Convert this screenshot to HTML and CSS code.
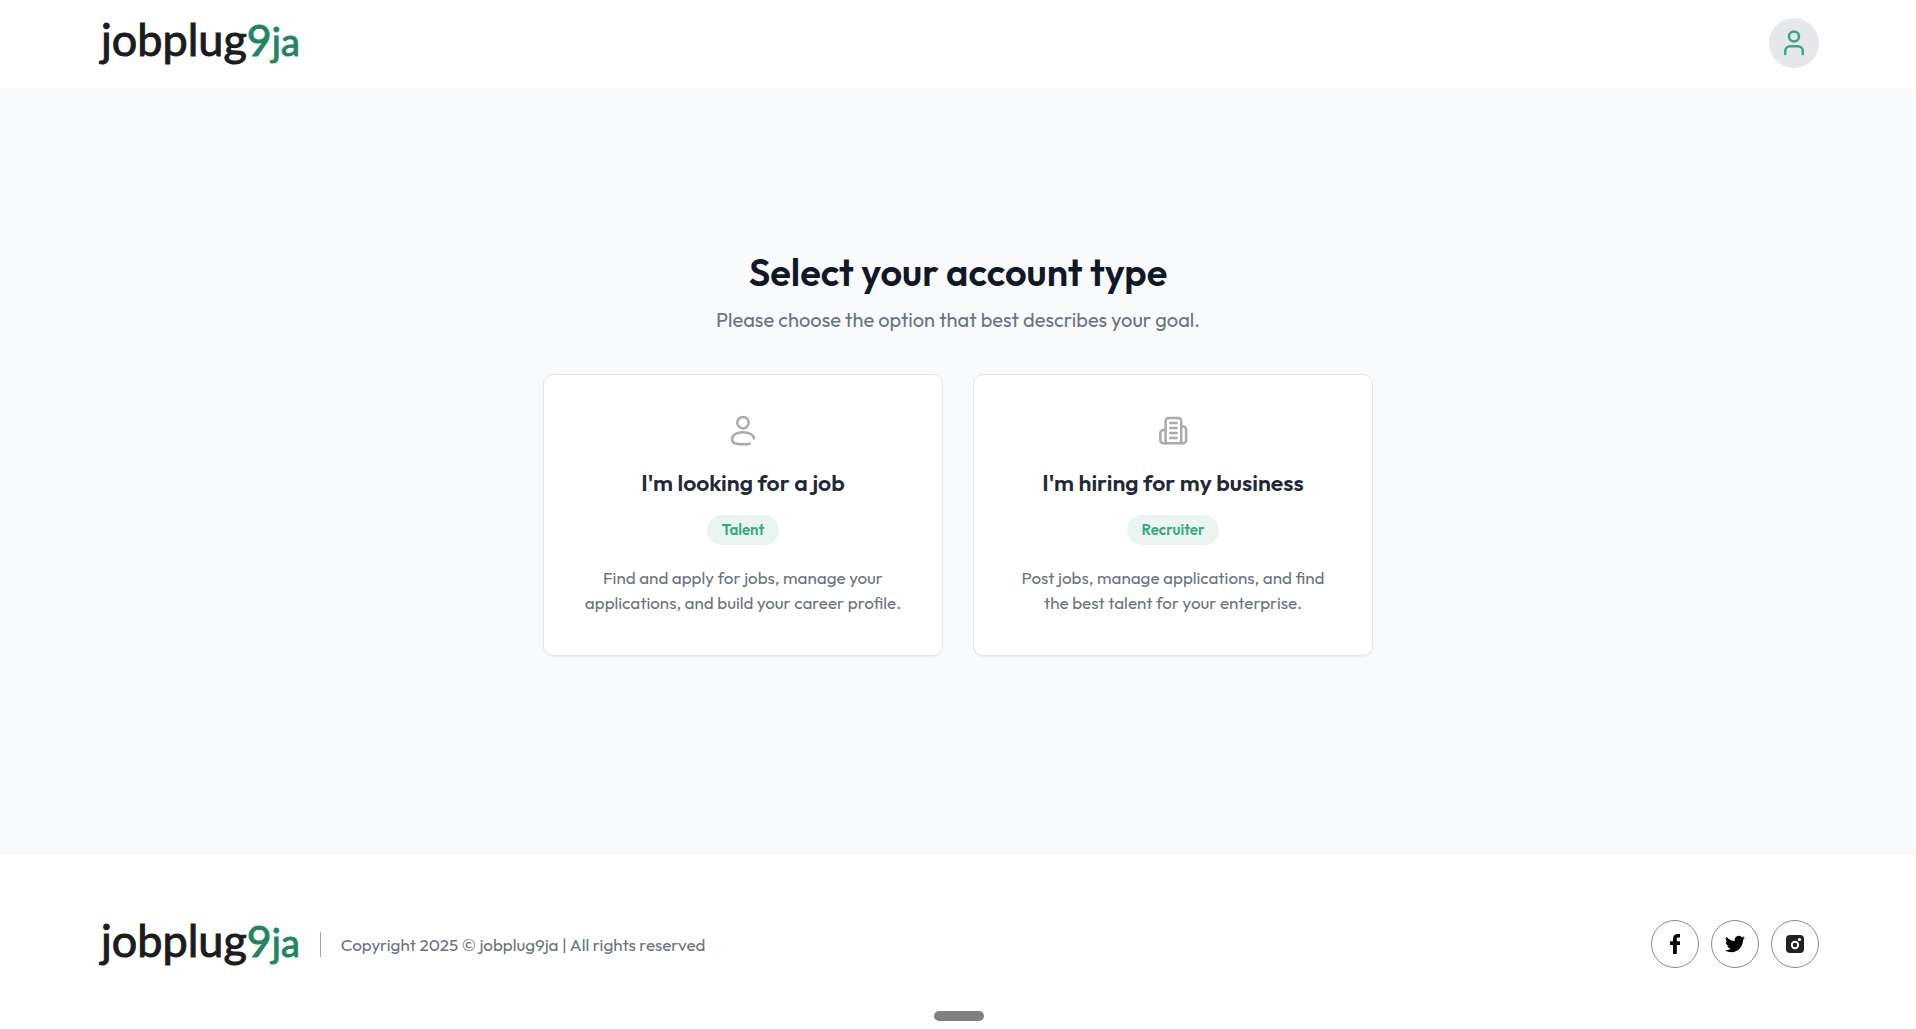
FILE: index.html
```html
<!DOCTYPE html>
<html lang="en">
<head>
<meta charset="utf-8">
<meta name="viewport" content="width=device-width, initial-scale=1">
<title>jobplug9ja | Select your account type</title>
<link rel="stylesheet" href="styles.css">
</head>
<body>
<header class="header">
  <a class="logo" href="#">jobplug<span class="logo-nine">9</span><span class="logo-ja">ja</span></a>
  <button class="avatar" type="button" aria-label="Account">
    <svg width="24" height="28" viewBox="0 0 24 28" fill="none" stroke="currentColor" stroke-width="2.5" stroke-linecap="round">
      <circle cx="12" cy="7.500" r="5"/>
      <path d="M3.200 25v-2.800a5 5 0 0 1 5-5h7.600a5 5 0 0 1 5 5V25"/>
    </svg>
  </button>
</header>

<main class="main">
  <h1 class="title">Select your account type</h1>
  <p class="subtitle">Please choose the option that best describes your goal.</p>
  <div class="cards">
    <a class="card" href="#">
      <svg class="card-icon" width="32" height="32" viewBox="0 0 32 32" fill="none" stroke="currentColor" stroke-width="2.500" stroke-linecap="round">
        <circle cx="16" cy="7.700" r="5.700"/>
        <path d="M26.900 23.600C26.900 19.800 22 17.300 16 17.300S5.100 20 5.100 23.900c0 4.800 4.400 5.400 10.900 5.400 2.800 0 5-.1 6.700-.6"/>
      </svg>
      <h2 class="card-title">I'm looking for a job</h2>
      <span class="pill">Talent</span>
      <p class="card-text">Find and apply for jobs, manage your applications, and build your career profile.</p>
    </a>
    <a class="card" href="#">
      <svg class="card-icon" width="32" height="32" viewBox="0 0 32 32" fill="none" stroke="currentColor" stroke-width="2.500" stroke-linecap="round" stroke-linejoin="round">
        <path d="M8.600 28.200V6a3 3 0 0 1 3-3h9.600a3 3 0 0 1 3 3v22.200"/>
        <path d="M8.600 15H6.300a3 3 0 0 0-3 3v7.200a3 3 0 0 0 3 3h19.800a3 3 0 0 0 3-3V14.500a3 3 0 0 0-3-3h-1.900"/>
        <path d="M13.200 8h6.400M13.200 13h6.400M13.200 18h6.400M13.200 23h6.400"/>
      </svg>
      <h2 class="card-title">I'm hiring for my business</h2>
      <span class="pill">Recruiter</span>
      <p class="card-text">Post jobs, manage applications, and find the best talent for your enterprise.</p>
    </a>
  </div>
</main>

<footer class="footer">
  <div class="footer-brand">
    <a class="logo" href="#">jobplug<span class="logo-nine">9</span><span class="logo-ja">ja</span></a>
    <p class="copyright">Copyright 2025 © jobplug9ja | All rights reserved</p>
  </div>
  <nav class="socials" aria-label="Social media">
    <a class="social" href="#" aria-label="Facebook">
      <svg width="20" height="20" viewBox="0 0 20 20" fill="currentColor"><path d="M8 20v-9H5V7.200h3V5c0-3.200 1.900-5 4.900-5H15v3.600h-1.800c-1.200 0-1.400.6-1.400 1.700v1.900H15V11h-3.200v9z"/></svg>
    </a>
    <a class="social" href="#" aria-label="Twitter">
      <svg width="20" height="20" viewBox="0 0 24 24" fill="currentColor"><path d="M23.950 4.570a10 10 0 0 1-2.820.770 4.960 4.960 0 0 0 2.160-2.720c-.95.560-2 .960-3.120 1.180a4.920 4.920 0 0 0-8.380 4.480C7.690 8.090 4.070 6.130 1.640 3.160a4.920 4.920 0 0 0 1.520 6.570 4.900 4.900 0 0 1-2.230-.610v.060a4.920 4.920 0 0 0 3.950 4.830 5 5 0 0 1-2.210.080 4.940 4.940 0 0 0 4.600 3.420A9.870 9.870 0 0 1 0 19.540a13.990 13.990 0 0 0 7.550 2.210c9.050 0 14-7.500 14-13.990 0-.21 0-.42-.020-.63a9.940 9.940 0 0 0 2.420-2.560z"/></svg>
    </a>
    <a class="social social-instagram" href="#" aria-label="Instagram">
      <svg width="20" height="20" viewBox="0 0 20 20" fill="currentColor"><rect x="1" y="1" width="18" height="18" rx="4"/><circle cx="10" cy="11" r="3.200" fill="none" stroke="#fff" stroke-width="1.900"/><circle cx="14.500" cy="5.500" r="1.600" fill="#fff"/></svg>
    </a>
  </nav>
  <div class="handle"></div>
</footer>
</body>
</html>
```

FILE: styles.css
```css
* {
  box-sizing: border-box;
}

body {
  margin: 0;
  min-height: 100vh;
  display: flex;
  flex-direction: column;
  background: #fff;
  color: #6b7280;
  font-family: Outfit, Lato, sans-serif;
}

h1, h2, p {
  margin: 0;
}

a {
  color: inherit;
  text-decoration: none;
}

.header {
  height: 88px;
  padding: 0 97px 2px 101px;
  display: flex;
  align-items: center;
  justify-content: space-between;
}

.logo {
  padding-bottom: 8px;
  font-family: Lato, sans-serif;
  font-size: 45px;
  line-height: 40px;
  color: #1c1c1c;
  white-space: nowrap;
  -webkit-text-stroke: 1px currentColor;
}

.logo-nine,
.logo-ja {
  line-height: 1px;
  color: #1f8563;
}

.logo-nine {
  font-size: 43px;
}

.logo-ja {
  font-size: 38px;
}

.avatar {
  width: 50px;
  height: 50px;
  padding: 0;
  border: 0;
  border-radius: 50%;
  display: grid;
  place-items: center;
  background: #e5e7eb;
  color: #38a882;
}

.main {
  flex: 1;
  padding: 0 24px 40px;
  display: flex;
  flex-direction: column;
  align-items: center;
  justify-content: center;
  background: #f9fafc;
  text-align: center;
}

.title {
  font-size: 38px;
  line-height: 48px;
  font-weight: 600;
  color: #111827;
}

.subtitle {
  margin: 10px 0 40px;
  font-size: 20px;
  line-height: 28px;
}

.cards {
  width: 100%;
  max-width: 830px;
  display: grid;
  grid-template-columns: 1fr 1fr;
  gap: 30px;
}

.card {
  padding: 40px 36px;
  border: 1px solid #e5e7eb;
  border-radius: 10px;
  display: flex;
  flex-direction: column;
  align-items: center;
  background: #fff;
  box-shadow: 0 1px 2px rgba(0, 0, 0, 0.06);
}

.card-icon {
  color: #aaa;
}

.card-title {
  margin: 20px 0 16px;
  font-size: 23px;
  line-height: 32px;
  font-weight: 600;
  color: #1f2937;
}

.pill {
  padding: 0 15px;
  border-radius: 15px;
  font-size: 15px;
  line-height: 30px;
  font-weight: 600;
  background: #eaf5f1;
  color: #38a882;
}

.card-text {
  margin-top: 20px;
  font-size: 17px;
  line-height: 25px;
}

.footer {
  position: relative;
  padding: 65px 97px 61px 101px;
  display: flex;
  align-items: center;
  justify-content: space-between;
}

.footer-brand {
  display: flex;
  align-items: center;
  gap: 20px;
}

.copyright {
  padding-left: 20px;
  border-left: 1px solid #9ca3af;
  font-size: 17px;
  line-height: 25px;
}

.socials {
  display: flex;
  gap: 12px;
}

.social {
  width: 48px;
  height: 48px;
  border: 1px solid #8a8a8a;
  border-radius: 50%;
  display: grid;
  place-items: center;
  color: #000;
}

.social-instagram {
  color: #222;
}

.handle {
  position: absolute;
  left: 50%;
  bottom: 8px;
  width: 50px;
  height: 10px;
  margin-left: -24px;
  border-radius: 5px;
  background: #808080;
}
```
